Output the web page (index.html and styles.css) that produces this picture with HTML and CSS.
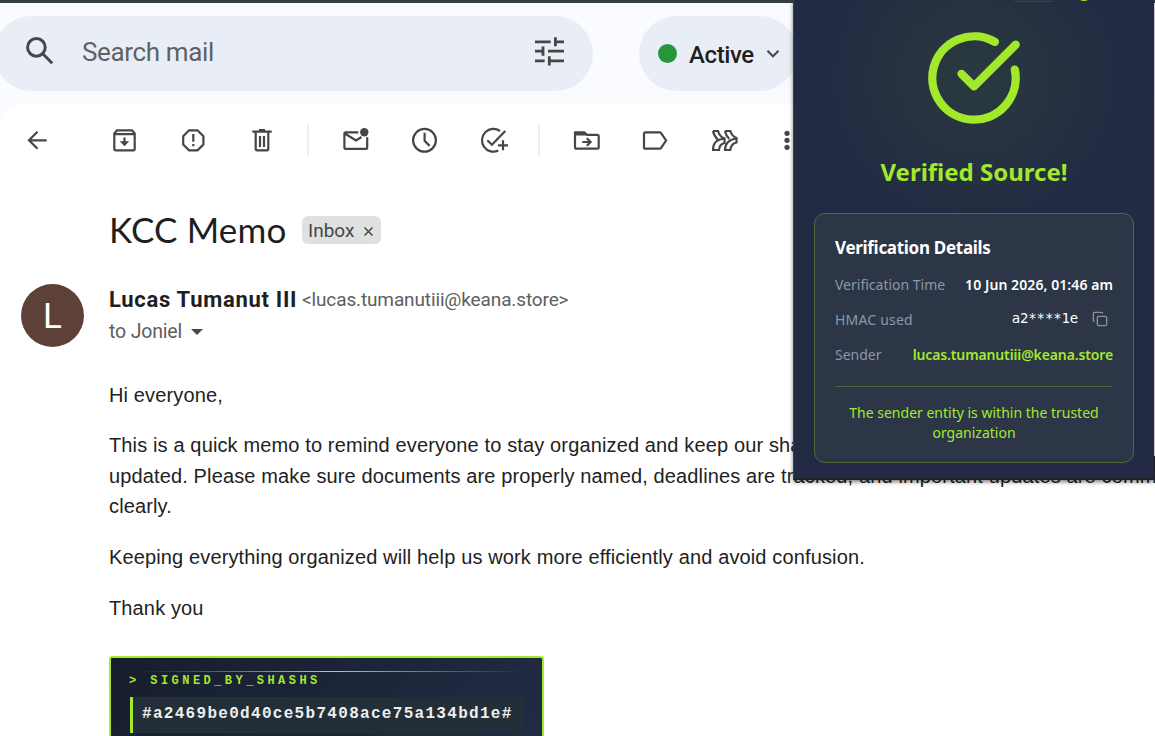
FILE: index.html
```html
<!DOCTYPE html>
<html lang="en">
<head>
<meta charset="utf-8">
<title>KCC Memo</title>
<link rel="stylesheet" href="styles.css">
</head>
<body>
<div class="app">
  <header class="header">
    <div class="search">
      <svg class="search-icon" width="32" height="32" viewBox="0 0 32 32"><circle cx="12.4" cy="12.4" r="8.8"/><path d="M18.8 18.8 28.2 28.2"/></svg>
      <span class="search-text">Search mail</span>
      <svg class="tune" width="32" height="32" viewBox="0 0 32 32"><path d="M2 6.8h15.7M22.4 2.3v9M22.4 6.8H31M2 16.2h8M10 11.6v9.2M15 16.2h16M2 25.8h9.7M16.3 21.2v9.2M16.3 25.8H31"/></svg>
    </div>
    <div class="status">
      <span class="dot"></span><span class="status-text">Active</span>
      <svg width="14" height="10" viewBox="0 0 14 10"><path d="M1.500 1.800 7 7.300l5.500-5.500"/></svg>
    </div>
  </header>
  <main class="main">
    <nav class="toolbar">
      <svg class="ico back" viewBox="0 0 32 32"><path d="M8 16.300h17.700M16.500 7.800 8 16.300l8.500 8.500"/></svg>
      <svg class="ico" viewBox="0 0 32 32"><path d="M6.300 9.500 9 6.300h15l2.700 3.200v15.300q0 1.500-1.500 1.500H7.800q-1.500 0-1.500-1.500zM6.300 10.200h20.400"/><path d="M16.500 13.500v7"/><path class="fill" d="M11.800 17.300h9.400l-4.700 5z"/></svg>
      <svg class="ico" viewBox="0 0 32 32"><path d="M12.100 6.300h8.400l5.900 5.900v8.300l-5.900 5.900h-8.400l-5.900-5.900v-8.300zM16.300 10v7.700M16.300 20v2.300"/></svg>
      <svg class="ico" viewBox="0 0 32 32"><path d="M6.300 7.700h19.400M13 6.200h6M9.700 8v16.800q0 1.500 1.500 1.500h9.600q1.500 0 1.500-1.500V8M14 12v11M18 12v11"/></svg>
      <i class="sep"></i>
      <svg class="ico" viewBox="0 0 32 32"><path d="M18.300 8.300H5.800q-1.400 0-1.400 1.400v13.700q0 1.400 1.400 1.400h20q1.400 0 1.400-1.400V13.300M4.800 9.500l11.200 7 5.500-3.500"/><circle class="fill" cx="24.300" cy="8.300" r="4.200"/></svg>
      <svg class="ico" viewBox="0 0 32 32"><circle cx="15.500" cy="16.300" r="11.400"/><path d="M15.600 8.700v8.200l5 5"/></svg>
      <svg class="ico" viewBox="0 0 32 32"><path d="M22 7A11.400 11.400 0 1 0 20.300 26.600M9.300 16.200l4.600 4.500L27.300 7M25 16.300v10M20 21.300h10"/></svg>
      <i class="sep sep2"></i>
      <svg class="ico" viewBox="0 0 32 32"><path d="M4 23.500V8.500h9.500l2.500 2.300h10.300q1.400 0 1.400 1.400v11.100q0 1.400-1.400 1.400H5.400Q4 24.700 4 23.500zM11.300 18h8M15.800 14.200l3.800 3.800-3.800 3.800"/><path class="fill" d="M4 7.500h9.500l3 4H4z"/></svg>
      <svg class="ico lab" viewBox="0 0 32 32"><path d="M5 9.800q0-1.400 1.400-1.400H20.500q1 0 1.600.8l5 7.300-5 7.300q-.6.900-1.600.900H6.400Q5 24.700 5 23.300z"/></svg>
      <svg class="ico fwd" viewBox="0 0 32 32"><path d="M5 7h5q1.500 5.500 6.500 7.500M5 7q1.200 5.500 4.800 8.500M5 26q0-10.500 11.500-11.500v4.500q-5 1-5.500 7zM17 7h5.300q1.700 5.200 6.200 7v4.500q-5.500 1.300-6.200 7.500H17q0-9.500 11-11.500M17 7q1 5 4.300 8M16.500 14.500v4.300"/></svg>
      <svg class="ico dots" viewBox="0 0 32 32"><circle class="fill" cx="16" cy="9.300" r="2.600"/><circle class="fill" cx="16" cy="16.300" r="2.600"/><circle class="fill" cx="16" cy="23.300" r="2.600"/></svg>
    </nav>
    <div class="subject"><h1>KCC Memo</h1><span class="tag"><span>Inbox</span><svg width="11" height="11" viewBox="0 0 11 11"><path d="M1.500 1.500l8 8M9.500 1.500l-8 8"/></svg></span></div>
    <div class="sender">
      <div class="avatar">L</div>
      <div class="who">
        <div class="line"><b>Lucas Tumanut III</b><span class="addr">&lt;lucas.tumanutiii@keana.store&gt;</span></div>
        <div class="to"><span>to Joniel</span><i class="caret"></i></div>
      </div>
    </div>
    <article class="message">
      <p>Hi everyone,</p>
      <p>This is a quick memo to remind everyone to stay organized and keep our shared files and project records<br>updated. Please make sure documents are properly named, deadlines are tracked, and important updates are communicated<br>clearly.</p>
      <p>Keeping everything organized will help us work more efficiently and avoid confusion.</p>
      <p>Thank you</p>
    </article>
    <section class="signature">
      <div class="beam"></div>
      <div class="signed">&gt; SIGNED_BY_SHASHS</div>
      <div class="hash">#a2469be0d40ce5b7408ace75a134bd1e#</div>
    </section>
  </main>
  <aside class="popup">
    <i class="chip"></i><i class="bead"></i>
    <svg class="verified" width="100" height="100" viewBox="0 0 24 24"><path d="M21.801 10A10 10 0 1 1 17 3.335"/><path d="m9 11 3 3L22 4"/></svg>
    <h2>Verified Source!</h2>
    <div class="card">
      <h3>Verification Details</h3>
      <div class="row"><span class="k">Verification Time</span><span class="v">10 Jun 2026, 01:46 am</span></div>
      <div class="row"><span class="k hmac">HMAC used</span><span class="mono">a2****1e</span><svg class="copy" width="16" height="16" viewBox="0 0 24 24"><rect x="8" y="8" width="14" height="14" rx="2"/><path d="M4 16c-1.100 0-2-.9-2-2V4c0-1.100.9-2 2-2h10c1.100 0 2 .9 2 2"/></svg></div>
      <div class="row"><span class="k">Sender</span><span class="v green">lucas.tumanutiii@keana.store</span></div>
      <p class="note">The sender entity is within the trusted<br>organization</p>
    </div>
  </aside>
  <i class="edge"></i>
</div>
</body>
</html>
```
FILE: styles.css
```css
* { box-sizing: border-box; }
body { margin: 0; background: #fff; }
h1, h2, h3, p { margin: 0; }
svg { display: block; fill: none; stroke: #444746; stroke-width: 2; flex: none; }
.fill { fill: #444746; stroke: none; }
.app { position: relative; width: 1155px; height: 736px; overflow: hidden; padding-top: 3px; background: linear-gradient(#333f44 3px, #f9fbff 3px); font-family: Roboto, "Liberation Sans", sans-serif; white-space: nowrap; }
.header { display: flex; height: 100px; padding-top: 13px; }
.search { display: flex; align-items: center; width: 599px; height: 75px; margin-left: -6px; padding: 0 28px 0 30px; border-radius: 38px; background: #e9eef6; }
.search-icon { stroke-width: 3; margin-top: -5px; }
.search-text { margin-left: 26px; font-size: 26px; line-height: 32px; color: #5f6163; letter-spacing: -0.350px; margin-top: -3px; }
.tune { margin-left: auto; stroke-width: 2.800; margin-top: -5px; }
.status { display: flex; align-items: center; width: 158px; height: 75px; margin-left: 46px; padding-left: 19px; border-radius: 38px; background: #e9eef6; }
.dot { width: 19px; height: 19px; border-radius: 50%; background: #279639; margin-top: -1px; }
.status-text { margin: 2px 12px 0 12px; font-size: 24px; font-weight: 500; color: #1f1f1f; letter-spacing: -0.400px; }
.main { height: 633px; padding-top: 21px; border-radius: 24px 0 0 0; background: #fff; }
.toolbar { display: flex; align-items: center; height: 32px; gap: 37px; padding-left: 21px; }
.ico { width: 32px; height: 32px; stroke-width: 2.200; }
.back { margin-right: 18px; }
.sep { width: 1.500px; height: 31px; background: #e9edf4; margin: 0 -5.250px 0 -8px; }
.sep2 { margin: 0 -5.500px 0 -9px; }
.lab { margin-left: -1px; }
.fwd { stroke-width: 2.200; }
.dots { margin-left: -6px; }
.subject { display: flex; align-items: center; height: 40px; margin-top: 54px; padding-left: 109px; }
h1 { font: 400 35px/40px Lato, sans-serif; width: 193px; margin-top: -2px; color: #1f1f1f; letter-spacing: 0.200px; }
.tag { display: flex; align-items: center; width: 79px; height: 28px; padding-left: 6px; border-radius: 6px; background: #dfe1e0; font-size: 19px; color: #444746; }
.tag span { width: 55px; }
.tag svg { stroke-width: 1.500; margin-top: 3px; }
.sender { display: flex; margin-top: 34px; padding-left: 21px; }
.avatar { width: 63px; height: 63px; border-radius: 50%; background: #5d4037; color: #fff; text-align: center; font: 35px/65px Roboto, sans-serif; }
.who { margin-left: 25px; }
.line { display: flex; height: 32px; line-height: 31px; }
.line b { width: 193px; font-size: 22px; color: #1f1f1f; letter-spacing: 0.700px; }
.addr { font-size: 19px; color: #5e5e5e; letter-spacing: -0.130px; }
.to { display: flex; align-items: center; font-size: 19.500px; height: 31px; color: #5e5e5e; letter-spacing: -0.170px; }
.caret { margin-left: 9px; border: 6px solid transparent; border-top-color: #444746; border-bottom: 0; }
.message { margin-top: 33px; padding-left: 109px; font: 20px/30.500px "Liberation Sans", Arial, sans-serif; letter-spacing: 0.135px; color: #222; }
.message p { margin-bottom: 20.200px; }
.message p:first-child { margin-bottom: 19.700px; }
.signature { position: relative; width: 435px; height: 110px; margin: 33px 0 0 109px; padding: 15px 19px; border: 2px solid #a2e92b; border-radius: 3px; background: linear-gradient(135deg, #181d2c 0%, #1c273b 60%, #232b46 100%); font-family: "Liberation Mono", monospace; font-weight: 700; }
.beam { position: absolute; left: 29px; right: 19px; top: 13px; height: 1px; background: linear-gradient(90deg, transparent, #a2e92b 50%, transparent); }
.signed { font-size: 12px; line-height: 16px; color: #a2e92b; letter-spacing: 3.450px; margin-left: -1px; }
.hash { width: 393px; height: 36px; margin-top: 8px; padding-left: 9px; border-left: 3px solid #a2e92b; background: #222e38; color: #eee; font-size: 16px; line-height: 34px; letter-spacing: 1.300px; }
.popup { position: absolute; left: 793px; top: 0; width: 361px; height: 480px; padding: 28px 20px 0; border-left: 1px solid #394052; border-bottom: 2px solid #202226; background: radial-gradient(circle at 180px 78px, #2a3842 0, #283640 40px, #222b43 150px); box-shadow: 0 2px 4px rgba(0,0,0,.5); font-family: "Noto Sans", sans-serif; }
.verified { margin: 0 auto; stroke: #a2e92b; stroke-linecap: round; stroke-linejoin: round; }
.chip { position: absolute; left: 220px; top: 0; width: 39px; height: 2px; border: 1px solid #38415a; border-top: 0; border-radius: 0 0 3px 3px; }
.bead { position: absolute; left: 283px; top: -11px; width: 14px; height: 12px; border-radius: 50%; background: #a2e92b; }
h2 { text-align: center; margin-top: 26px; font-size: 24px; line-height: 35px; color: #a2e92b; }
.card { width: 320px; height: 250px; margin-top: 24px; padding: 20px; border: 1px solid #4b6b3a; border-radius: 11px; background: #2c3647; }
h3 { font-size: 17px; line-height: 28px; color: #fff; letter-spacing: -0.300px; }
.row { display: flex; align-items: center; height: 35px; font-size: 14px; }
.row:nth-child(2) { margin-top: 5px; }
.k { margin-right: auto; color: #8b98aa; }
.hmac { letter-spacing: 0.200px; }
.v { font-weight: 600; color: #fff; letter-spacing: 0.080px; }
.v.green { color: #a2e92b; letter-spacing: -0.130px; }
.mono { font: 14px "DejaVu Sans Mono", monospace; color: #fff; margin-top: -4px; letter-spacing: -0.150px; }
.copy { margin: 0 5px 2px 14px; stroke: #8e918f; }
.note { margin-top: 14px; padding-top: 16px; border-top: 1px solid #486239; text-align: center; color: #a2e92b; font-size: 14px; line-height: 20px; }
.edge { position: absolute; right: 0; top: 456px; width: 1px; height: 24px; background: #1f2022; }
```
